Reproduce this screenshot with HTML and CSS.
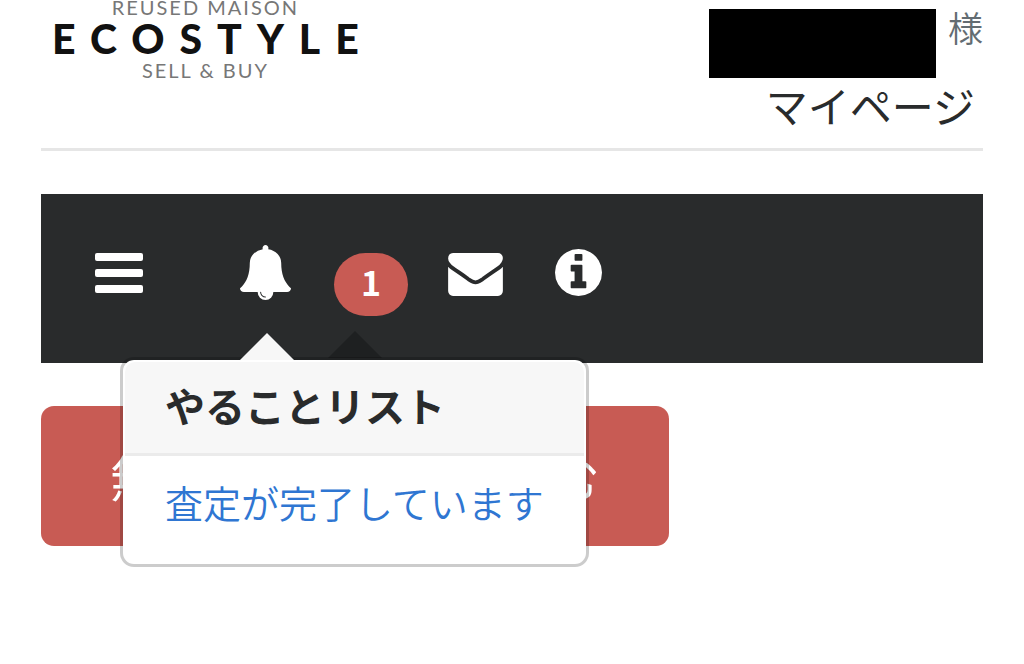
FILE: index.html
```html
<!DOCTYPE html>
<html lang="ja">
<head>
    <meta charset="UTF-8">
    <meta name="viewport" content="width=device-width, initial-scale=1.0">
    <title>マイページ</title>
    <link rel="stylesheet" href="styles.css">
</head>
<body>

    <header class="header">
        <a href="#" class="logo">
            <span class="logo-sub">REUSED MAISON</span>
            <span class="logo-name">ECOSTYLE</span>
            <span class="logo-sub">SELL &amp; BUY</span>
        </a>
        <div class="user">
            <div class="user-name"><span class="user-mask"></span>様</div>
            <a href="#" class="mypage">マイページ</a>
        </div>
    </header>

    <nav class="navbar">
        <button type="button" class="nav-item menu" aria-label="メニュー">
            <svg width="48" height="40" viewBox="0 0 48 40">
                <rect width="48" height="8" rx="2"/>
                <rect y="16" width="48" height="8" rx="2"/>
                <rect y="32" width="48" height="8" rx="2"/>
            </svg>
        </button>

        <div class="notice">
            <a href="#" class="nav-item" aria-label="お知らせ">
                <svg width="51" height="55" viewBox="64 0 1664 1792"><path d="M912 1696q0-16-16-16-59 0-101.5-42.5t-42.5-101.5q0-16-16-16t-16 16q0 73 51.5 124.5t124.5 51.5q16 0 16-16zm816-288q0 52-38 90t-90 38h-448q0 106-75 181t-181 75-181-75-75-181h-448q-52 0-90-38t-38-90q50-42 91-88t85-119.5 74.5-158.5 50-206 19.5-260q0-152 117-282.5t307-158.5q-8-19-8-39 0-40 28-68t68-28 68 28 28 68q0 20-8 39 190 28 307 158.5t117 282.5q0 139 19.5 260t50 206 74.5 158.5 85 119.5 91 88z"/></svg>
            </a>
            <span class="badge">1</span>

            <!-- やることリスト -->
            <div class="popover">
                <h3 class="popover-title">やることリスト</h3>
                <div class="popover-content">
                    <a href="#">査定が完了しています</a>
                </div>
            </div>
        </div>

        <a href="#" class="nav-item mail" aria-label="メッセージ">
            <svg width="55" height="43" viewBox="0 256 1792 1408"><path d="M1792 710v794q0 66-47 113t-113 47h-1472q-66 0-113-47t-47-113v-794q44 49 101 87 362 246 497 345 57 42 92.5 65.5t94.5 48 110 24.5h2q51 0 110-24.5t94.5-48 92.5-65.5q170-123 498-345 57-39 100-87zm0-294q0 79-49 151t-122 123q-376 261-468 325-10 7-42.5 31t-54 38.5-52 32.5-57.5 27-50 9h-2q-23 0-50-9t-57.5-27-52-32.5-54-38.5-42.5-31q-91-64-262-182.5t-205-142.5q-62-42-117-115.5t-55-136.5q0-78 41.5-130t118.5-52h1472q65 0 112.5 47t47.5 113z"/></svg>
        </a>
        <a href="#" class="nav-item info" aria-label="ご案内">
            <svg width="47" height="47" viewBox="128 128 1536 1536"><path d="M1152 1376v-160q0-14-9-23t-23-9h-96v-512q0-14-9-23t-23-9h-320q-14 0-23 9t-9 23v160q0 14 9 23t23 9h96v320h-96q-14 0-23 9t-9 23v160q0 14 9 23t23 9h448q14 0 23-9t9-23zm-128-896v-160q0-14-9-23t-23-9h-192q-14 0-23 9t-9 23v160q0 14 9 23t23 9h192q14 0 23-9t9-23zm640 416q0 209-103 385.5t-279.5 279.5-385.5 103-385.5-103-279.5-279.5-103-385.5 103-385.5 279.5-279.5 385.5-103 385.5 103 279.5 279.5 103 385.5z"/></svg>
        </a>
    </nav>

    <button type="button" class="btn-apply">無料で査定を申し込む</button>

</body>
</html>
```

FILE: styles.css
```css
* {
    box-sizing: border-box;
}

body {
    min-height: 100vh;
    margin: 0;
    padding: 0 41px;
    background-color: #fff;
    color: #292b2c;
    font-family: "Noto Sans CJK JP", sans-serif;
}

a {
    text-decoration: none;
}

button {
    border: 0;
    font-family: inherit;
    cursor: pointer;
}

.header {
    display: flex;
    justify-content: space-between;
    padding-bottom: 16px;
    border-bottom: 3px solid #e6e6e6;
}

/* ロゴ */
.logo {
    display: flex;
    flex-direction: column;
    align-items: center;
    padding-left: 11px;
    color: #111;
    font-family: Lato, sans-serif;
}

.logo-sub {
    color: #777;
    font-size: 20px;
    line-height: 15px;
    letter-spacing: 2px;
}

.logo-name {
    font-size: 41px;
    font-weight: 900;
    line-height: 48px;
    letter-spacing: 15px;
    margin-right: -15px;
}

.user {
    display: flex;
    flex-direction: column;
    align-items: flex-end;
    padding-top: 9px;
}

.user-name {
    display: flex;
    gap: 12px;
    color: #636c72;
    font-size: 35px;
    font-weight: 350;
    line-height: 36px;
}

.user-mask {
    width: 227px;
    height: 69px;
    background-color: #000;
}

.mypage {
    padding-right: 8px;
    color: #292b2c;
    font-size: 42px;
    font-weight: 400;
    line-height: 54px;
}

/* ナビゲーション */
.navbar {
    display: flex;
    align-items: flex-start;
    gap: 40px;
    margin-top: 43px;
    padding: 51px 54px 47px;
    background-color: #292b2c;
}

.nav-item {
    display: flex;
    align-items: center;
    height: 55px;
    padding: 0;
    background: none;
}

.nav-item svg {
    fill: #fff;
}

.menu {
    margin-right: 57px;
}

.mail {
    padding-top: 4px;
}

.info {
    margin-left: 12px;
}

.notice {
    position: relative;
    display: flex;
    gap: 43px;
}

.badge {
    margin-top: 8px;
    padding: 0 27px 5px;
    border-radius: 32px;
    background-color: #c85b54;
    color: #fff;
    font-size: 34px;
    font-weight: bold;
    line-height: 58px;
}

/* ポップオーバー */
.popover {
    position: absolute;
    top: 112px;
    left: -120px;
    padding: 2px;
    border: 3px solid rgba(0, 0, 0, 0.2);
    border-radius: 14px;
    background-color: #fff;
    background-clip: padding-box;
    white-space: nowrap;
}

.popover::before,
.popover::after {
    content: "";
    position: absolute;
    bottom: 100%;
    border: 27px solid transparent;
    border-top-width: 0;
}

.popover::before {
    left: 205px;
    margin-bottom: 2px;
    border-bottom-color: rgba(0, 0, 0, 0.25);
}

.popover::after {
    left: 117px;
    border-bottom-color: #f7f7f7;
}

.popover-title {
    margin: 0;
    padding: 15px 40px 20px;
    border-bottom: 3px solid #ebebeb;
    border-radius: 10px 10px 0 0;
    background-color: #f7f7f7;
    font-size: 40px;
    line-height: 56px;
}

.popover-content {
    padding: 19px 40px 33px;
    font-size: 38px;
    font-weight: 350;
    line-height: 54px;
}

.popover-content a {
    color: #2f76d2;
}

.btn-apply {
    margin-top: 43px;
    padding: 0 69px;
    border-radius: 13px;
    background-color: #c85b54;
    color: #fff;
    font-size: 49px;
    line-height: 140px;
}
```
